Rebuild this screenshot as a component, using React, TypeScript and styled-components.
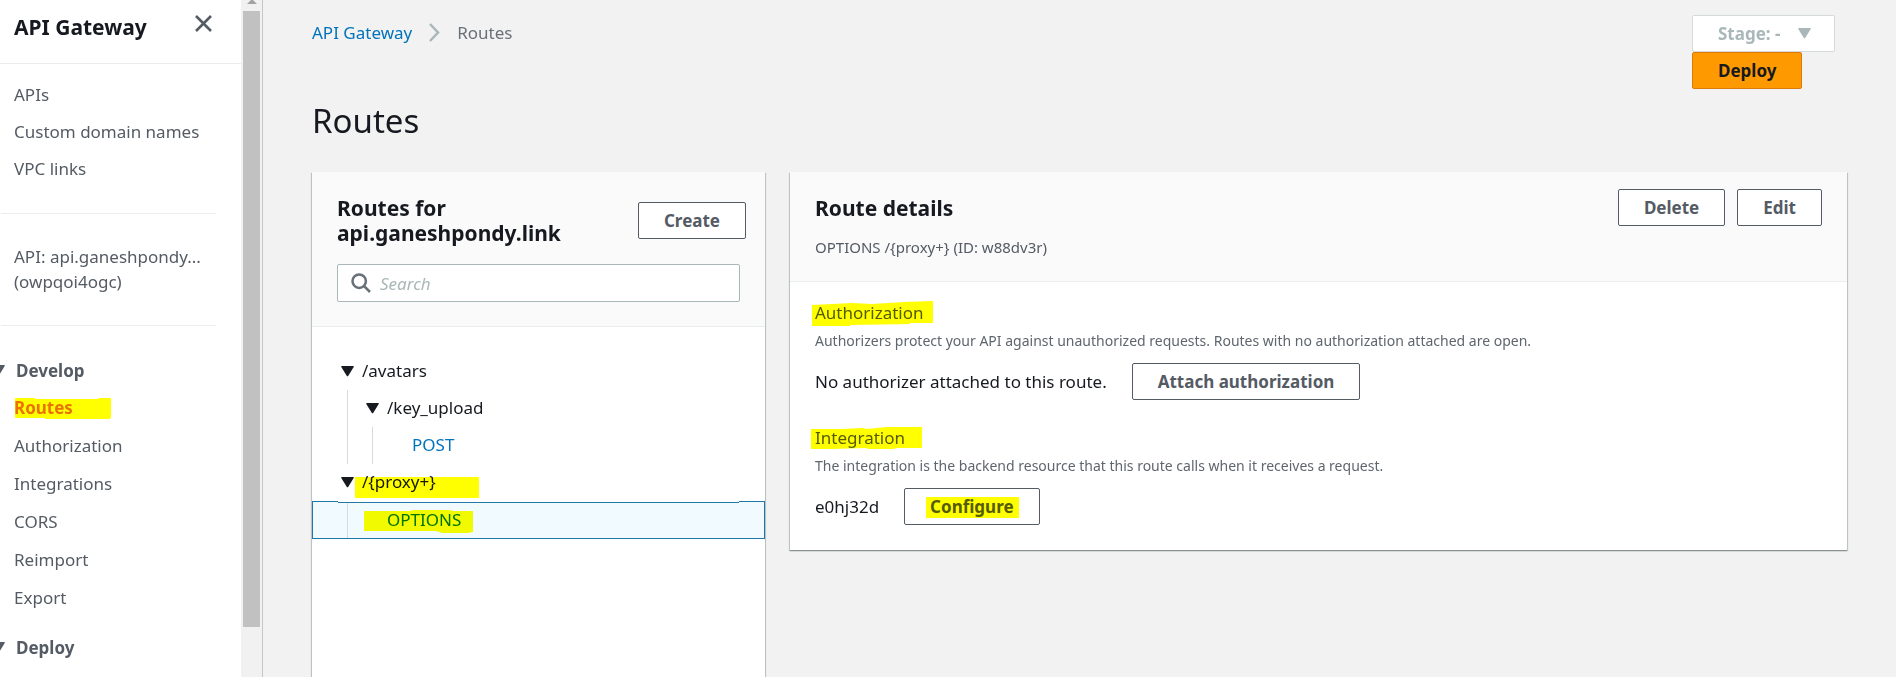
import React from "react";
import styled, { createGlobalStyle, css } from "styled-components";

const GlobalStyle = createGlobalStyle`
  *, *::before, *::after { box-sizing: border-box; }
  body {
    margin: 0;
    background: #f2f2f2;
    color: #16191f;
    font: 17px/25px "Noto Sans", "Open Sans", sans-serif;
  }
  button, input, select { font: inherit; }
  h1, h2, h3, p, ul { margin: 0; padding: 0; }
  ul { list-style: none; }
  a { text-decoration: none; }
`;

const Shell = styled.div`
  display: flex;
  height: 100vh;
  overflow: hidden;
`;

/* ---------- sidebar ---------- */

const Sidebar = styled.aside`
  display: flex;
  flex: 0 0 263px;
  overflow: hidden;
  background: #fff;
  border-right: 1px solid #c4c6c8;
`;

const SidebarContent = styled.div`
  flex: 1;
  min-width: 0;
  overflow: hidden;
`;

const SidebarHeader = styled.header`
  display: flex;
  align-items: flex-start;
  justify-content: space-between;
  height: 64px;
  padding: 15px 29px 0 14px;
  border-bottom: 1px solid #eaeded;
`;

const SidebarTitle = styled.h2`
  font-size: 21px;
  line-height: 25px;
  font-weight: 700;
`;

const CloseButton = styled.button`
  display: flex;
  padding: 0;
  border: 0;
  background: none;
  color: #545b64;
`;

const NavList = styled.ul`
  display: flex;
  flex-direction: column;
  gap: 13px;
`;

const NavBlock = styled.div`
  margin: 0 25px 0 1px;
  padding: 30px 0 31px 13px;
  border-bottom: 1px solid #eaeded;
  color: #545b64;

  &:first-of-type {
    padding: 18px 0 32px 13px;
  }

  ${NavList} {
    gap: 12px;
  }
`;

const NavLink = styled.a<{ $active?: boolean }>`
  position: relative;
  color: ${(p) => (p.$active ? "#ec7211" : "#545b64")};
  font-weight: ${(p) => (p.$active ? 700 : 400)};
`;

const NavSection = styled.section`
  padding: 0 0 25px 14px;

  ${NavList} { margin-top: 12px; }
`;

const NavSections = styled.div`
  padding-top: 32px;
`;

const SectionToggle = styled.button`
  display: flex;
  align-items: center;
  gap: 11px;
  margin-left: -22px;
  padding: 0;
  border: 0;
  background: none;
  color: #545b64;
  font-weight: 700;
`;

const ScrollTrack = styled.div`
  display: flex;
  flex-direction: column;
  align-items: center;
  flex: 0 0 21px;
  background: #f1f1f1;
`;

const ScrollThumb = styled.div`
  width: 17px;
  height: 91%;
  margin-top: 7px;
  background: #c1c1c1;
`;

/* ---------- main ---------- */

const Main = styled.main`
  display: flex;
  flex-direction: column;
  flex: 1;
  min-width: 0;
  padding: 15px 49px 0;
`;

const TopBar = styled.div`
  display: flex;
  align-items: flex-start;
  justify-content: space-between;
  padding-right: 12px;
`;

const Breadcrumbs = styled.nav`
  display: flex;
  align-items: center;
  gap: 17px;
  padding-top: 5px;
  color: #687078;

  a { color: #0073bb; }
`;

const StageActions = styled.div`
  display: flex;
  flex-direction: column;
  align-items: flex-start;
`;

const Button = styled.button<{ $primary?: boolean }>`
  position: relative;
  height: 37px;
  padding: 0 25px;
  border: 1px solid #545b64;
  border-radius: 2px;
  background: #fff;
  color: #545b64;
  font-weight: 700;
  line-height: 25px;
  white-space: nowrap;

  ${(p) =>
    p.$primary &&
    css`
      border-color: #dd7a0c;
      background: #ff9900;
      color: #16191f;
    `}
`;

const StagePicker = styled.label`
  position: relative;
  color: #aab7b8;

  select {
    display: block;
    width: 143px;
    height: 37px;
    padding: 0 25px;
    border: 1px solid #d5dbdb;
    border-radius: 2px;
    background: #fff;
    color: inherit;
    font-weight: 700;
    appearance: none;
    opacity: 1;
  }

  svg {
    position: absolute;
    top: 13px;
    right: 24px;
  }
`;

const PageTitle = styled.h1`
  padding: 10px 0 29px;
  font-size: 33px;
  line-height: 44px;
  font-weight: 400;
`;

const Columns = styled.div`
  display: grid;
  grid-template-columns: 3fr 7fr;
  gap: 25px;
  flex: 1;
`;

const Panel = styled.section<{ $fill?: boolean }>`
  align-self: ${(p) => (p.$fill ? "stretch" : "start")};
  min-width: 0;
  background: #fff;
  box-shadow: 0 1px 1px #8b9292, 1px 1px 1px #c8cccc, -1px 1px 1px #c8cccc;
`;

const PanelHeader = styled.header`
  padding: 17px 25px 24px;
  border-bottom: 1px solid #eaeded;
  background: #fafafa;
`;

const HeaderRow = styled.div<{ $bleed?: boolean }>`
  display: flex;
  align-items: ${(p) => (p.$bleed ? "center" : "flex-start")};
  justify-content: space-between;
  gap: 12px;
  padding-top: ${(p) => (p.$bleed ? "6px" : "0")};
  margin-right: ${(p) => (p.$bleed ? "-6px" : "0")};
`;

const PanelTitle = styled.h2`
  padding-top: 1px;
  font-size: 21px;
  line-height: 25px;
  font-weight: 700;
  overflow-wrap: anywhere;
`;

const DetailsTitle = styled(PanelTitle)`
  padding-top: 7px;
`;

const ButtonGroup = styled.div`
  display: flex;
  gap: 12px;
`;

const SearchBox = styled.label`
  display: flex;
  align-items: center;
  gap: 9px;
  height: 38px;
  margin-top: 18px;
  padding: 0 13px;
  border: 1px solid #aab7b8;
  border-radius: 2px;
  background: #fff;
  color: #687078;

  input {
    flex: 1;
    min-width: 0;
    padding: 0;
    border: 0;
    outline: 0;
    background: none;
  }
  input::placeholder {
    color: #aab7b8;
    font-style: italic;
    opacity: 1;
  }
`;

const Tree = styled.div`
  padding-top: 26px;
`;

const TreeRow = styled.div<{ $selected?: boolean }>`
  position: relative;
  display: flex;
  align-items: stretch;
  height: ${(p) => (p.$selected ? "38px" : "37px")};
  padding-left: 25px;
  line-height: 35px;

  ${(p) =>
    p.$selected &&
    css`
      background: #f1faff;
      border: solid #1f78a8;
      border-width: 1px;
      padding-left: 24px;

      &::after {
        content: "";
        position: absolute;
        top: -1px;
        left: 25px;
        right: 25px;
        height: 2px;
        background: #fff;
        border-bottom: 1px solid #1f78a8;
      }
    `}
`;

const Guide = styled.span`
  flex: 0 0 25px;

  &::before {
    content: "";
    display: block;
    width: 1px;
    height: 100%;
    margin-left: 10px;
    background: #d5dbdb;
  }
`;

const Toggle = styled.button`
  display: flex;
  align-items: center;
  flex: 0 0 25px;
  padding: 0 4px;
  border: 0;
  background: none;
  color: #16191f;
`;

const RouteLink = styled.a<{ $indent?: boolean }>`
  position: relative;
  margin-left: ${(p) => (p.$indent ? "25px" : "0")};
  color: #0073bb;
`;

const PathName = styled.span`
  position: relative;
`;

const Subtitle = styled.p`
  padding: 11px 0 0;
  color: #545b64;
  font-size: 15px;
  line-height: 20px;
`;

const PanelBody = styled.div`
  display: flex;
  flex-direction: column;
  gap: 25px;
  padding: 18px 25px 25px;
`;

const FieldTitle = styled.h3`
  color: #545b64;
  font-size: 17px;
  line-height: 25px;
  font-weight: 400;

  span { position: relative; }
`;

const Hint = styled.p`
  padding: 6px 0 4px;
  color: #5f666e;
  font-size: 14px;
  line-height: 20px;
`;

const FieldRow = styled.div`
  display: flex;
  align-items: center;
  gap: 25px;
  margin-top: 8px;
`;

const Highlight = styled.svg`
  position: absolute;
  overflow: visible;
  mix-blend-mode: multiply;
  pointer-events: none;
  fill: #ffff00;
`;

type MarkerProps = { left: number; top: number; d: string };

/* A highlighter stroke laid over the text of its positioned parent. */
const Marker = ({ left, top, d }: MarkerProps) => (
  <Highlight width="1" height="1" style={{ left, top }} aria-hidden="true">
    <path d={d} />
  </Highlight>
);

const Caret = () => (
  <svg width="13" height="11" viewBox="0 0 13 11" fill="currentColor" aria-hidden="true">
    <path d="M.8 0h11.4q1 .1.5 1L7.3 9.8q-.8 1-1.6 0L.3 1Q-.1.1.8 0Z" />
  </svg>
);

const sections = [
  { title: "Develop", items: ["Routes", "Authorization", "Integrations", "CORS", "Reimport", "Export"] },
  { title: "Deploy", items: [] },
];

export default function App() {
  return (
    <>
      <GlobalStyle />
      <Shell>
        <Sidebar>
          <SidebarContent>
            <SidebarHeader>
              <SidebarTitle>API Gateway</SidebarTitle>
              <CloseButton aria-label="Close navigation">
                <svg width="17" height="17" viewBox="0 0 17 17" fill="none" stroke="currentColor" strokeWidth="2.6">
                  <path d="M1 1l15 15M16 1L1 16" />
                </svg>
              </CloseButton>
            </SidebarHeader>
            <NavBlock>
              <NavList>
                {["APIs", "Custom domain names", "VPC links"].map((label) => (
                  <li key={label}>
                    <NavLink href="#">{label}</NavLink>
                  </li>
                ))}
              </NavList>
            </NavBlock>
            <NavBlock>
              <p>API: api.ganeshpondy...</p>
              <p>(owpqoi4ogc)</p>
            </NavBlock>
            <NavSections>
              {sections.map(({ title, items }) => (
                <NavSection key={title}>
                  <SectionToggle aria-expanded="true">
                    <Caret />
                    {title}
                  </SectionToggle>
                  {items.length > 0 && (
                    <NavList>
                      {items.map((label) => (
                        <li key={label}>
                          <NavLink href="#" $active={label === "Routes"}>
                            {label}
                            {label === "Routes" && (
                              <Marker left={1} top={2} d="M0 0H20V1H82L84 0H96V20L94 21H30V20H0Z" />
                            )}
                          </NavLink>
                        </li>
                      ))}
                    </NavList>
                  )}
                </NavSection>
              ))}
            </NavSections>
          </SidebarContent>
          <ScrollTrack>
            <svg width="10" height="4" viewBox="0 0 10 4" fill="#a3a3a3" aria-hidden="true">
              <path d="M4 0h2l4 4H0Z" />
            </svg>
            <ScrollThumb />
          </ScrollTrack>
        </Sidebar>

        <Main>
          <TopBar>
            <Breadcrumbs aria-label="Breadcrumb">
              <a href="#">API Gateway</a>
              <svg width="11" height="19" viewBox="0 0 11 19" fill="none" stroke="#aab7b8" strokeWidth="2.5">
                <path d="M1 1l8 8.5L1 18" />
              </svg>
              <span>Routes</span>
            </Breadcrumbs>
            <StageActions>
              <StagePicker>
                <select disabled aria-label="Stage">
                  <option>Stage: -</option>
                </select>
                <Caret />
              </StagePicker>
              <Button $primary>Deploy</Button>
            </StageActions>
          </TopBar>
          <PageTitle>Routes</PageTitle>

          <Columns>
            <Panel $fill>
              <PanelHeader>
                <HeaderRow $bleed>
                  <PanelTitle>
                    Routes for
                    <br />
                    api.ganeshpondy.link
                  </PanelTitle>
                  <Button>Create</Button>
                </HeaderRow>
                <SearchBox>
                  <svg width="20" height="20" viewBox="0 0 20 20" fill="none" stroke="currentColor" strokeWidth="2.5">
                    <circle cx="8.2" cy="8.2" r="6.7" />
                    <path d="M13 13l6 6" />
                  </svg>
                  <input type="search" placeholder="Search" aria-label="Search routes" />
                </SearchBox>
              </PanelHeader>
              <Tree>
                <TreeRow>
                  <Toggle aria-label="Collapse /avatars"><Caret /></Toggle>
                  <PathName>/avatars</PathName>
                </TreeRow>
                <TreeRow>
                  <Guide />
                  <Toggle aria-label="Collapse /key_upload"><Caret /></Toggle>
                  <PathName>/key_upload</PathName>
                </TreeRow>
                <TreeRow>
                  <Guide />
                  <Guide />
                  <RouteLink href="#" $indent>POST</RouteLink>
                </TreeRow>
                <TreeRow>
                  <Toggle aria-label="Collapse /{proxy+}"><Caret /></Toggle>
                  <PathName>
                    {"/{proxy+}"}
                    <Marker left={-7} top={13} d="M0 0H124V21H0Z" />
                  </PathName>
                </TreeRow>
                <TreeRow $selected>
                  <Guide />
                  <RouteLink href="#" $indent>
                    OPTIONS
                    <Marker left={-23} top={8} d="M0 1H45L50 0H85L90 1H109V22L104 23H78L72 21H0Z" />
                  </RouteLink>
                </TreeRow>
              </Tree>
            </Panel>

            <Panel>
              <PanelHeader>
                <HeaderRow>
                  <DetailsTitle>Route details</DetailsTitle>
                  <ButtonGroup>
                    <Button>Delete</Button>
                    <Button>Edit</Button>
                  </ButtonGroup>
                </HeaderRow>
                <Subtitle>{"OPTIONS /{proxy+} (ID: w88dv3r)"}</Subtitle>
              </PanelHeader>
              <PanelBody>
                <div>
                  <FieldTitle>
                    <span>
                      Authorization
                      <Marker left={-3} top={0} d="M0 4L40 2L60 3L92 1L121 0V22H98V23L38 24V25H0Z" />
                    </span>
                  </FieldTitle>
                  <Hint>
                    Authorizers protect your API against unauthorized requests. Routes with no authorization attached
                    are open.
                  </Hint>
                  <FieldRow>
                    <span>No authorizer attached to this route.</span>
                    <Button>Attach authorization</Button>
                  </FieldRow>
                </div>
                <div>
                  <FieldTitle>
                    <span>
                      Integration
                      <Marker left={-4} top={1} d="M0 2H30L52 1L56 2L76 0H111V21H86L82 22H58L54 21L20 22H0Z" />
                    </span>
                  </FieldTitle>
                  <Hint>The integration is the backend resource that this route calls when it receives a request.</Hint>
                  <FieldRow>
                    <span>e0hj32d</span>
                    <Button>
                      Configure
                      <Marker left={21} top={8} d="M0 0H93V21H0Z" />
                    </Button>
                  </FieldRow>
                </div>
              </PanelBody>
            </Panel>
          </Columns>
        </Main>
      </Shell>
    </>
  );
}
